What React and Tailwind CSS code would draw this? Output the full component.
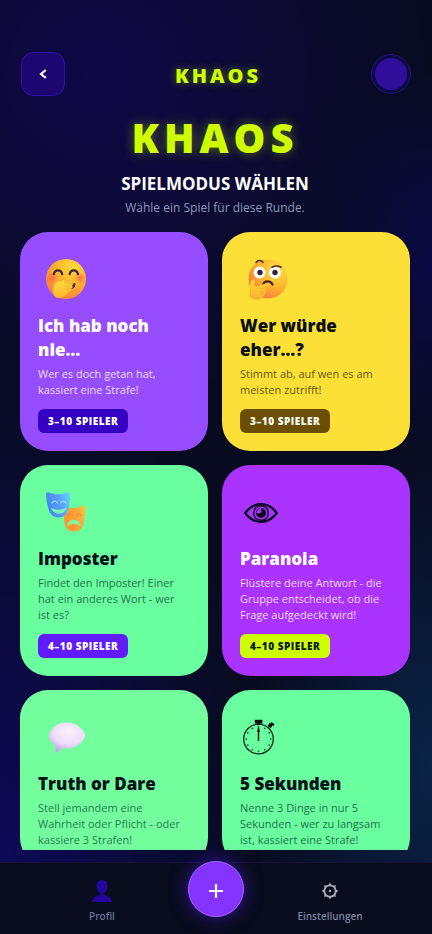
import React from "react";

function GiggleFace() {
  return (
    <svg viewBox="0 0 40 40" className="ml-2 size-10" aria-hidden="true">
      <defs>
        <radialGradient id="giggle" cx="0.68" cy="0.2" r="0.95">
          <stop offset="0" stopColor="#ffd93a" />
          <stop offset="0.45" stopColor="#fdb52c" />
          <stop offset="0.8" stopColor="#f8883a" />
          <stop offset="1" stopColor="#f0607a" />
        </radialGradient>
        <radialGradient id="blush">
          <stop offset="0" stopColor="#ff5a4c" stopOpacity="0.75" />
          <stop offset="1" stopColor="#ff5a4c" stopOpacity="0" />
        </radialGradient>
        <linearGradient id="hand" x1="0" y1="0" x2="0" y2="1">
          <stop offset="0" stopColor="#ffdc3c" />
          <stop offset="1" stopColor="#fdb62e" />
        </linearGradient>
      </defs>
      <circle cx="20" cy="20" r="20" fill="url(#giggle)" />
      <circle cx="6" cy="19" r="6" fill="url(#blush)" />
      <circle cx="34" cy="19" r="6" fill="url(#blush)" />
      <path d="M7.800 15.200c1-5.200 7.400-5.200 8.400 0M23.600 15.200c1-5.200 7.400-5.200 8.400 0" fill="none" stroke="#3c2738" strokeWidth="2.200" strokeLinecap="round" />
      <path d="M26 25.600l3-1.100-.6 3.400-2.800 1.800z" fill="#4b2635" stroke="#4b2635" strokeLinejoin="round" />
      <path d="M8.500 24.500C10 21.500 14 22.800 16.500 21.200c2.500-1.600 3.500.6 1.900 2l6.200-1.300c2-.3 2.400 1.700 1 2.300 1.600.2 1.700 2 .2 2.600 1.200.5.9 2.200-.5 2.600.9.800.3 2.300-1 2.500l-2 1.700C20 39 10 41.500 7.500 35.500 6.200 32 6.500 28 8.500 24.500z" fill="url(#hand)" stroke="#f08a2a" strokeWidth="0.400" />
      <path d="M19 25.300l6.500-1M19.500 28l6.200-1.200M19.800 30.600l5.300-1.100" stroke="#f0962a" strokeWidth="0.600" fill="none" />
    </svg>
  );
}

function ThinkFace() {
  return (
    <svg viewBox="0 0 40 42" className="ml-2 h-[42px] w-10" aria-hidden="true">
      <defs>
        <radialGradient id="think" cx="0.75" cy="0.25" r="0.9">
          <stop offset="0" stopColor="#ffe03c" />
          <stop offset="0.5" stopColor="#fdb62e" />
          <stop offset="0.85" stopColor="#f9853c" />
          <stop offset="1" stopColor="#f36a72" />
        </radialGradient>
        <linearGradient id="thumb" x1="0" y1="0" x2="0" y2="1">
          <stop offset="0" stopColor="#ffd632" />
          <stop offset="1" stopColor="#fbb22e" />
        </linearGradient>
      </defs>
      <circle cx="20" cy="21" r="19.500" fill="url(#think)" />
      <circle cx="11.500" cy="14.500" r="6" fill="#fff" />
      <circle cx="27" cy="14.500" r="6" fill="#fff" />
      <circle cx="12" cy="14.500" r="2.700" fill="#33223a" />
      <circle cx="27" cy="14.500" r="2.700" fill="#33223a" />
      <path d="M8 4.500c1.800-2.600 5.500-2.600 7-.2M24 9.300c3-1.700 6-1.700 9 0" fill="none" stroke="#4b2a2c" strokeWidth="1.600" strokeLinecap="round" />
      <path d="M15.200 26.500c1-4.200 7.600-4.200 9.300 0" fill="none" stroke="#43232f" strokeWidth="2.200" strokeLinecap="round" />
      <path d="M2 29.500c-.6-3.600.6-6.200 2.200-7.800 1.500-1 3 0 2.800 2l-.5 3.800 1.700.5c4-.6 8.500-2.600 12-2.800 2.600 0 2.600 3 .2 3.600l-3 .8c1.600.7 1.500 2.500.2 3.100 1 .9.600 2.500-.8 2.900.4 1.800-.8 3.300-3 4.300C9 42 3.500 42 2 38z" fill="url(#thumb)" stroke="#ef8a2a" strokeWidth="0.400" />
      <path d="M11.500 31l5.500-1.500M12.500 33.800l4.700-1M12.300 36.500l3.800-.9" stroke="#ee9628" strokeWidth="0.600" fill="none" />
    </svg>
  );
}

function Masks() {
  return (
    <svg viewBox="0 0 40 40" className="ml-2 size-10" aria-hidden="true">
      <defs>
        <linearGradient id="happy" x1="0" y1="0.300" x2="1" y2="0">
          <stop offset="0" stopColor="#4585f5" />
          <stop offset="0.550" stopColor="#5ba3fb" />
          <stop offset="1" stopColor="#5fe0fb" />
        </linearGradient>
        <linearGradient id="sad" x1="0" y1="0.300" x2="1" y2="0">
          <stop offset="0" stopColor="#fb9430" />
          <stop offset="0.600" stopColor="#fda73a" />
          <stop offset="1" stopColor="#e6cf45" />
        </linearGradient>
      </defs>
      <path d="M17.500 17c0-1.800 1-2.600 2.600-2 5 1.700 11.500 1.300 17-1.300 1.700-.7 2.900.2 2.800 2-.3 5.800-1 11-2.300 16.300-1 4.500-4.700 7.500-9.600 7.500-4.800 0-8.500-3-9.300-7.500-.8-5-1.200-10-1.200-15z" fill="url(#sad)" />
      <path d="M21 24c1.300-2.500 4.300-2.500 5.600-.4M30 23.600c1.300-2.100 4.400-2.300 5.600 0" fill="none" stroke="#e88a38" strokeWidth="1.300" strokeLinecap="round" />
      <path d="M21.500 34c.3-8 12.700-8 13 0-3-3.500-10-3.500-13 0z" fill="#7dfba0" stroke="#7dfba0" strokeWidth="0.500" strokeLinejoin="round" />
      <path d="M0 2C0 .400 1.100-.3 2.700.4 9 2.800 15.500 2.600 21.500.5c1.700-.6 2.800.3 2.700 2-.2 5.500-.8 10.500-2 15.500C21 22.500 17.400 25.500 12.600 25.500S4 22.500 2.800 18C1.200 12.800.2 7.500 0 2z" fill="url(#happy)" />
      <path d="M6 11c1-2.300 4-2.400 5.200-.3M14.600 10.700c1.100-2.100 4-2 5.100.2" fill="none" stroke="#87d8fb" strokeWidth="1.500" strokeLinecap="round" />
      <path d="M5.200 15.500c3.500 3 11.700 3 15.200-.2-.5 8.200-14 8.600-15.200.2z" fill="#79f2b4" />
    </svg>
  );
}

function Eye() {
  return (
    <svg viewBox="0 0 34 20" className="mt-[2px] ml-1 h-5 w-[34px]" aria-hidden="true">
      <path d="M1.200 10C6 3.500 11 1.200 17 1.200S28 3.500 32.800 10C28 16.500 23 18.800 17 18.800S6 16.500 1.200 10z" fill="none" stroke="#0b0620" strokeWidth="2.200" />
      <circle cx="17" cy="10" r="7.300" fill="none" stroke="#0b0620" strokeWidth="1.500" />
      <path d="M17 5A5 5 0 1 1 12 10l2.800.4c1.600.2 2.400-.8 2.500-2.300z" fill="#0b0620" />
      <path d="M12.300 9.500a5 5 0 0 1 3.400-4.300" fill="none" stroke="#0b0620" strokeWidth="0.800" />
    </svg>
  );
}

function Bubble() {
  return (
    <svg viewBox="0 0 38 31" className="ml-[10px] h-[31px] w-[38px]" aria-hidden="true">
      <defs>
        <radialGradient id="bubble" cx="0.550" cy="0.300" r="0.700">
          <stop offset="0" stopColor="#fbeefb" />
          <stop offset="0.600" stopColor="#f0defa" />
          <stop offset="1" stopColor="#c3a5ee" />
        </radialGradient>
      </defs>
      <path d="M19 .5C27 .5 33.500 4.500 37.700 13.500 34.500 21.500 28 26.300 19 26.300c-2 0-3.700-.2-5.200-.6-1.500 2.500-3.800 4.300-6 4.800-.8 0-1-.7-.6-1.300.8-1.600.6-3.700-.5-5.900C3.500 21 1.500 17.500.5 13.500 3.500 5 10.500.5 19 .5z" fill="url(#bubble)" />
    </svg>
  );
}

function Stopwatch() {
  const ticks = [0, 30, 60, 90, 120, 150, 180, 210, 240, 270, 300, 330];
  return (
    <svg viewBox="0 0 32 36" className="ml-[3px] h-9 w-8" aria-hidden="true">
      <circle cx="15.500" cy="20" r="14.800" fill="none" stroke="#06261c" strokeWidth="1.300" />
      <path d="M11.800.8h7.600v3.600h-7.600z" fill="#04150f" />
      <path d="M15.600 4v2" stroke="#04150f" strokeWidth="3" />
      <path d="M24.600 7l2-3.200 3.300 2.400-2.300 3z" fill="#04150f" />
      <path d="M28 3.900l3 2.200" stroke="#04150f" strokeWidth="2" />
      <path d="M15.500 8.500V22" stroke="#04150f" strokeWidth="1.500" />
      <path d="M15.500 8l1.500 5h-3z" fill="#04150f" />
      {ticks.map((a) => (
        <circle key={a} cx="15.500" cy="7.700" r="0.800" fill="#06261c" transform={`rotate(${a} 15.500 20)`} />
      ))}
    </svg>
  );
}

const games = [
  {
    title: "Ich hab noch nie…",
    text: "Wer es doch getan hat, kassiert eine Strafe!",
    players: "3–10 SPIELER",
    Icon: GiggleFace,
    card: "bg-[#964dff] text-white",
    desc: "text-[#ecdcff]",
    badge: "bg-[#3500c4] text-white",
  },
  {
    title: "Wer würde eher…?",
    text: "Stimmt ab, auf wen es am meisten zutrifft!",
    players: "3–10 SPIELER",
    Icon: ThinkFace,
    card: "bg-[#fce038] text-[#0a0f12]",
    desc: "text-[#655b12]",
    badge: "bg-[#6b4e00] text-white",
  },
  {
    title: "Imposter",
    text: "Findet den Imposter! Einer hat ein anderes Wort - wer ist\u00a0es?",
    players: "4–10 SPIELER",
    Icon: Masks,
    card: "bg-[#6aff9f] text-[#03101c]",
    desc: "text-[#22704d]",
    badge: "bg-[#611bff] text-white",
  },
  {
    title: "Paranoia",
    text: "Flüstere deine Antwort - die Gruppe entscheidet, ob die Frage aufgedeckt wird!",
    players: "4–10 SPIELER",
    Icon: Eye,
    card: "bg-[#aa33ff] text-white",
    desc: "text-[#f0d6ff]",
    badge: "bg-[#ceff00] text-[#0b1a10]",
  },
  {
    title: "Truth or Dare",
    text: "Stell jemandem eine Wahrheit oder Pflicht - oder kassiere 3 Strafen!",
    players: "",
    Icon: Bubble,
    card: "bg-[#74ff9f] text-[#03101c]",
    desc: "text-[#277a4f]",
    badge: "",
  },
  {
    title: "5 Sekunden",
    text: "Nenne 3 Dinge in nur 5 Sekunden - wer zu langsam ist, kassiert eine Strafe!",
    players: "",
    Icon: Stopwatch,
    card: "bg-[#6aff9f] text-[#03101c]",
    desc: "text-[#22704d]",
    badge: "",
  },
];

function GameCard({ game }) {
  const { Icon } = game;
  return (
    <button type="button" className={`flex flex-col items-start rounded-[28px] p-[18px] text-left ${game.card}`}>
      <span className="mb-[6px] flex h-[58px] items-center">
        <Icon />
      </span>
      <span className="text-[17px] leading-6 font-extrabold">{game.title}</span>
      <span className={`mt-1 text-[11px] leading-4 ${game.desc}`}>{game.text}</span>
      {game.players && (
        <span className={`mt-[11px] rounded-md px-[10px] text-[10px] leading-6 font-extrabold tracking-[0.5px] whitespace-nowrap ${game.badge}`}>
          {game.players}
        </span>
      )}
    </button>
  );
}

export default function App() {
  return (
    <div className="flex h-dvh flex-col bg-[#080b20] bg-[radial-gradient(circle_at_22%_8%,#100848_0%,#10084800_36%),radial-gradient(ellipse_at_100%_82%,#0a2346_0%,#0a234600_30%),radial-gradient(ellipse_at_0%_92%,#0d0a58_0%,#0d0a5800_42%),radial-gradient(ellipse_at_100%_28%,#0a0a44_0%,#0a0a4400_20%)] font-['Open_Sans','Noto_Sans',sans-serif]">
      <header className="flex items-center justify-between pt-[52px] pr-[21px] pl-[21px]">
        <button type="button" aria-label="Zurück" className="flex size-11 items-center justify-center rounded-xl border border-[#2a12a0] bg-[#1c0670] text-white">
          <svg viewBox="0 0 8 10" className="h-[10px] w-2" aria-hidden="true">
            <path d="M6.800 1L2 5l4.800 4" fill="none" stroke="currentColor" strokeWidth="2.200" />
          </svg>
        </button>
        <div className="pt-1 text-[20px] leading-6 font-extrabold tracking-[3px] text-[#ceff00] [text-shadow:0_0_8px_#ceff0066]">KHAOS</div>
        <button type="button" aria-label="Konto" className="flex size-10 items-center justify-center rounded-full border border-[#241080] bg-[#0e0a44]">
          <span className="size-8 rounded-full bg-[#2d0f9c]" />
        </button>
      </header>

      <main className="mb-3 min-h-0 flex-1 overflow-y-auto pt-4 pr-[22px] pl-5 [scrollbar-width:none]">
        <div className="text-center">
          <h1 className="text-[40px] leading-[52px] font-extrabold tracking-[5px] text-[#ceff00] [text-shadow:0_0_12px_#ceff0066]">KHAOS</h1>
          <h2 className="mt-2 text-[17px] leading-6 font-bold text-white">SPIELMODUS WÄHLEN</h2>
          <p className="mt-[2px] text-[12px] leading-5 text-[#9097b8]">Wähle ein Spiel für diese Runde.</p>
        </div>
        <div className="mt-[14px] grid grid-cols-2 gap-[14px]">
          {games.map((game) => (
            <GameCard key={game.title} game={game} />
          ))}
        </div>
      </main>

      <nav className="grid h-[72px] shrink-0 grid-cols-3 border-t border-[#14123a] bg-[#090c1c] px-[45px]">
        <button type="button" className="flex flex-col items-center pt-[17px] text-[10px] leading-4 font-semibold text-[#68709a]">
          <svg viewBox="0 0 20 22" className="mb-[6px] h-[22px] w-5" aria-hidden="true">
            <path d="M10 0c3.600 0 5.400 2.500 5.400 6.200 0 3-1.200 5.600-3 7v2c3 .9 7 1.800 7.300 6.800H.3c.3-5 4.300-5.900 7.300-6.800v-2c-1.800-1.400-3-4-3-7C4.600 2.500 6.400 0 10 0z" fill="#22069c" />
          </svg>
          Profil
        </button>
        <button type="button" aria-label="Neues Spiel" className="-mt-[2px] flex size-14 items-center justify-center justify-self-center rounded-full border border-[#a468ff] bg-[#8533ff] text-white shadow-[0_0_18px_#4a14d8b0]">
          <svg viewBox="0 0 16 16" className="mt-1 size-4" aria-hidden="true">
            <path d="M8 1v14M1 8h14" stroke="currentColor" strokeWidth="2.200" />
          </svg>
        </button>
        <button type="button" className="flex flex-col items-center pt-[17px] text-[10px] leading-4 font-semibold text-[#7b83a0]">
          <svg viewBox="0 0 20 22" className="mb-[6px] h-[22px] w-5" aria-hidden="true">
            <circle cx="10" cy="11" r="5.700" fill="none" stroke="#a9adc0" strokeWidth="1.800" />
            <circle cx="10" cy="11" r="1.200" fill="#a9adc0" />
            {[0, 45, 90, 135, 180, 225, 270, 315].map((a) => (
              <path key={a} d="M8.300 5.500L10 2.600l1.700 2.900z" fill="#a9adc0" transform={`rotate(${a} 10 11)`} />
            ))}
          </svg>
          Einstellungen
        </button>
      </nav>
    </div>
  );
}
